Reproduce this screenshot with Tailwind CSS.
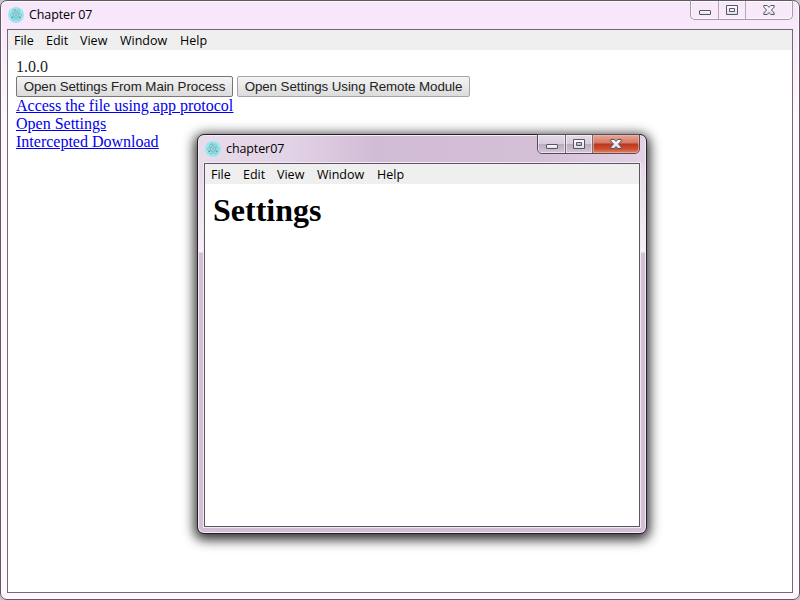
<!DOCTYPE html>
<html lang="en">
<head>
<meta charset="utf-8">
<title>Chapter 07</title>
<script src="https://cdn.jsdelivr.net/npm/@tailwindcss/browser@4"></script>
</head>
<body class="w-[800px] h-[600px] overflow-hidden relative bg-[#c9c4cc] text-black">
<svg class="absolute w-0 h-0">
  <defs>
    <symbol id="electron" viewBox="0 0 16 16">
      <circle cx="8" cy="8" r="8" fill="#9ce6ee"/>
      <g fill="none" stroke="#6ba5ae" stroke-width=".5">
        <ellipse cx="8" cy="8" rx="5.600" ry="2.200"/>
        <ellipse cx="8" cy="8" rx="5.600" ry="2.200" transform="rotate(60 8 8)"/>
        <ellipse cx="8" cy="8" rx="5.600" ry="2.200" transform="rotate(120 8 8)"/>
      </g>
      <g fill="#4f8f9b"><circle cx="8" cy="8" r=".7"/><circle cx="4" cy="10.500" r=".7"/><circle cx="12" cy="10.500" r=".7"/><circle cx="7" cy="3" r=".7"/></g>
    </symbol>
    <linearGradient id="glyph" x1="0" y1="0" x2="0" y2="1"><stop offset="0" stop-color="#fff"/><stop offset="1" stop-color="#dedee2"/></linearGradient>
    <symbol id="min" viewBox="0 0 12 5"><rect x=".5" y=".5" width="11" height="4" rx=".5" fill="url(#glyph)" stroke="#535666"/></symbol>
    <symbol id="max" viewBox="0 0 12 10"><path d="M.5 .5h11v9H.5zM3.500 3.500v3h5v-3z" fill="url(#glyph)" fill-rule="evenodd" stroke="#535666"/></symbol>
    <symbol id="close" viewBox="0 0 12 10"><path d="M.8.500h3.400L6 2.400 7.800.500h3.400v1.500L8.500 5l2.700 3v1.500H7.800L6 7.600 4.200 9.500H.8V8l2.700-3L.8 2z" fill="url(#glyph)" stroke="#535666" stroke-linejoin="round"/></symbol>
  </defs>
</svg>

<main class="w-[800px] h-[600px] rounded-[7px] border border-[#61585f] bg-[#fdf6fd] bg-[linear-gradient(180deg,#f6e6fa_0px,#f9e8fc_26px,#faeafc_45px,#fdf6fd_110px)] shadow-[inset_0_0_0_1px_#fffaff] px-[6px] pb-[6px] flex flex-col">
  <header class="h-[28px] shrink-0 flex items-start">
    <svg class="w-4 h-4 ml-px mt-[6px] shrink-0"><use href="#electron"/></svg>
    <span class="ml-[5px] mt-[5px] text-[12.500px] leading-[18px] whitespace-nowrap font-['Open_Sans','Noto_Sans_CJK_SC',sans-serif] tracking-[-.1px]">Chapter 07</span>
    <div class="ml-auto -mt-px w-[103px] h-[20px] border border-[#a79baa] border-t-[#61585f] rounded-b-[5px] flex bg-white/15 shadow-[inset_0_0_0_1px_#fff8]">
      <div class="w-[28px] border-r border-[#b5a9b8] flex justify-center pt-[9px]"><svg class="w-3 h-[5px]"><use href="#min"/></svg></div>
      <div class="w-[27px] border-r border-[#b5a9b8] flex justify-center pt-[4px]"><svg class="w-3 h-[10px]"><use href="#max"/></svg></div>
      <div class="flex-1 flex justify-center pt-[4px]"><svg class="w-3 h-[10px]"><use href="#close"/></svg></div>
    </div>
  </header>
  <section class="flex-1 border border-[#716a70] bg-white">
    <nav class="h-[20px] bg-[#efefef] flex pl-[6px] text-[12.500px] leading-[21px] font-['Open_Sans','Noto_Sans_CJK_SC',sans-serif]">
      <span class="w-[32px]">File</span><span class="w-[34px]">Edit</span><span class="w-[40px]">View</span><span class="w-[60px]">Window</span><span>Help</span>
    </nav>
    <div class="px-2 pt-2 text-[16px] leading-[18px] font-['Liberation_Serif',serif]">
      <div class="text-[#222]">1.0.0</div>
      <div class="flex gap-1 h-[21px] font-['Liberation_Sans',sans-serif] text-[13.333px] tracking-[-.07px] leading-[19px] text-[#222]">
        <button class="w-[217px] h-[21px] border border-[#777] rounded-[2px] bg-linear-to-b from-[#f4f4f4] to-[#dcdcdc] whitespace-nowrap">Open Settings From Main Process</button>
        <button class="w-[233px] h-[21px] border border-[#a6a6a6] rounded-[2px] bg-linear-to-b from-[#f4f4f4] to-[#dcdcdc] whitespace-nowrap">Open Settings Using Remote Module</button>
      </div>
      <div class="flex flex-col items-start text-[#0000ee] underline">
        <a href="#">Access the file using app protocol</a>
        <a href="#">Open Settings</a>
        <a href="#">Intercepted Download</a>
      </div>
    </div>
  </section>
</main>

<div class="absolute left-[197px] top-[134px] w-[450px] h-[400px] rounded-[7px] border border-[#252027] px-[6px] pb-[6px] flex flex-col bg-[#d3bfd6] bg-[linear-gradient(180deg,#e0d0e3_0px,#e5d9e7_30px,#f7f0f8_117px,#d3bfd6_118px)] shadow-[inset_0_0_0_1px_#f5eaf6,0_3px_12px_3px_#000c]">
  <header class="h-[28px] -mx-[5px] px-[5px] mt-px mb-[-1px] shrink-0 flex items-start rounded-t-[5px] bg-[linear-gradient(90deg,#e8dbea_0%,#e3d3e6_20%,#d1bcd5_40%,#d3bfd6_75%,#e3d2e6_100%)]">
    <svg class="w-4 h-4 ml-px mt-[5px] shrink-0"><use href="#electron"/></svg>
    <span class="ml-[5px] mt-[4px] text-[12.500px] leading-[18px] whitespace-nowrap font-['Open_Sans','Noto_Sans_CJK_SC',sans-serif] tracking-[-.1px]">chapter07</span>
    <div class="ml-auto -mt-[2px] w-[103px] h-[20px] border border-[#554b59] rounded-b-[5px] flex overflow-hidden bg-[linear-gradient(180deg,#e5dce8_0px,#d7cbdc_9px,#b9aabe_9px,#d4c5d8_18px)]">
      <div class="w-[28px] border-r border-[#746a78] shadow-[inset_0_0_0_1px_#fff8] flex justify-center pt-[9px]"><svg class="w-3 h-[5px]"><use href="#min"/></svg></div>
      <div class="w-[27px] border-r border-[#746a78] shadow-[inset_0_0_0_1px_#fff8] flex justify-center pt-[4px]"><svg class="w-3 h-[10px]"><use href="#max"/></svg></div>
      <div class="flex-1 flex justify-center pt-[4px] rounded-br-[4px] shadow-[inset_0_0_0_1px_#ffb9a599] bg-[linear-gradient(180deg,#e5a798_0px,#d67765_8px,#bd3520_9px,#ce4e32_14px,#df8a62_18px)]"><svg class="w-3 h-[10px]"><use href="#close"/></svg></div>
    </div>
  </header>
  <section class="flex-1 border border-[#5e5562] bg-white shadow-[0_0_0_1px_#f3e9f4]">
    <nav class="h-[20px] bg-[#efefef] flex pl-[6px] text-[12.500px] leading-[21px] font-['Open_Sans','Noto_Sans_CJK_SC',sans-serif]">
      <span class="w-[32px]">File</span><span class="w-[34px]">Edit</span><span class="w-[40px]">View</span><span class="w-[60px]">Window</span><span>Help</span>
    </nav>
    <h1 class="pl-2 pt-[8px] text-[32px] leading-[37px] font-bold font-['Liberation_Serif',serif]">Settings</h1>
  </section>
</div>
</body>
</html>
